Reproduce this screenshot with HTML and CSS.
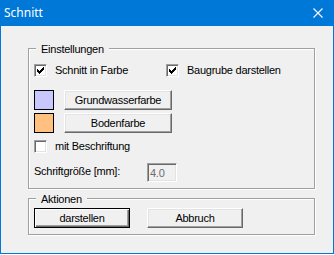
FILE: index.html
```html
<!DOCTYPE html>
<html lang="de">

<head>
  <meta charset="UTF-8" />
  <title>Schnitt</title>
  <link rel="stylesheet" href="styles.css">
</head>

<body>

<div class="window">
  <!-- Titelleiste -->
  <div class="titlebar">
    <span class="title">Schnitt</span>
    <svg class="close" width="10" height="10" viewBox="0 0 10 10">
      <path d="M0.5 0.5L9.5 9.5M9.5 0.5L0.5 9.5" stroke="#fff" stroke-width="1.1" />
    </svg>
  </div>

  <div class="client">
    <!-- Gruppe Einstellungen -->
    <div class="group group-settings">
      <span class="group-label">Einstellungen</span>

      <div class="check-row">
        <label class="check check-wide">
          <span class="box">
            <svg width="7" height="7" viewBox="0 0 7 7" shape-rendering="crispEdges"><path d="M6 0h1v1h-1zM5 1h2v1h-2zM0 2h1v1h-1zM4 2h3v1h-3zM0 3h2v1h-2zM3 3h3v1h-3zM0 4h5v1h-5zM1 5h3v1h-3zM2 6h1v1h-1z" /></svg>
          </span>
          Schnitt in Farbe
        </label>
        <label class="check">
          <span class="box">
            <svg width="7" height="7" viewBox="0 0 7 7" shape-rendering="crispEdges"><path d="M6 0h1v1h-1zM5 1h2v1h-2zM0 2h1v1h-1zM4 2h3v1h-3zM0 3h2v1h-2zM3 3h3v1h-3zM0 4h5v1h-5zM1 5h3v1h-3zM2 6h1v1h-1z" /></svg>
          </span>
          Baugrube darstellen
        </label>
      </div>

      <div class="color-row">
        <span class="swatch swatch-water"></span>
        <button type="button" class="btn btn-color">Grundwasserfarbe</button>
      </div>
      <div class="color-row">
        <span class="swatch swatch-ground"></span>
        <button type="button" class="btn btn-color">Bodenfarbe</button>
      </div>

      <div class="check-row check-row-caption">
        <label class="check">
          <span class="box"></span>
          mit Beschriftung
        </label>
      </div>

      <div class="font-row">
        <span class="font-label">Schriftgröße [mm]:</span>
        <input type="text" class="field" value="4.0" disabled />
      </div>
    </div>

    <!-- Gruppe Aktionen -->
    <div class="group group-actions">
      <span class="group-label">Aktionen</span>
      <button type="button" class="btn btn-action btn-default">darstellen</button>
      <button type="button" class="btn btn-action">Abbruch</button>
    </div>
  </div>
</div>

</body>
</html>
```

FILE: styles.css
```css
* {
  box-sizing: border-box;
}
body {
  margin: 0;
  background: #fff;
  font-family: "Liberation Sans", Arial, sans-serif;
  font-size: 11px;
  letter-spacing: -0.25px;
  color: #000;
}
.window {
  width: 334px;
  height: 254px;
  border: 1px solid #0078d7;
  border-top: 0;
  background: #f0f0f0;
}
.titlebar {
  height: 26px;
  background: #0078d7;
  display: flex;
  align-items: center;
  justify-content: space-between;
  padding: 0 10px 0 3px;
}
.title {
  font-family: "Segoe UI", "Noto Sans", sans-serif;
  font-size: 12px;
  line-height: 16px;
  letter-spacing: 0;
  color: #fff;
}
.close {
  display: block;
}
.client {
  padding: 22px 0 0 27px;
}

/* Rahmen der Gruppen (geätzt) */
.group {
  position: relative;
  width: 287px;
  border: 1px solid #a0a0a0;
  box-shadow: 1px 1px 0 #fff, inset 1px 1px 0 #fff;
}
.group-label {
  position: absolute;
  left: 7px;
  top: -6px;
  padding: 0 5px;
  line-height: 13px;
  background: #f0f0f0;
}
.group-settings {
  height: 141px;
  padding: 15px 0 0 5px;
}
.group-actions {
  height: 37px;
  margin-top: 9px;
  padding: 9px 0 0 5px;
  display: flex;
  gap: 17px;
}

/* Kontrollkästchen */
.check-row {
  display: flex;
}
.check-row-caption {
  margin-top: 7px;
}
.check {
  display: flex;
  align-items: center;
  gap: 8px;
  line-height: 13px;
}
.check-wide {
  width: 132px;
}
.box {
  width: 13px;
  height: 13px;
  display: flex;
  padding: 2px 0 0 2px;
  background: #fff;
  border: 1px solid;
  border-color: #a0a0a0 #fff #fff #a0a0a0;
  box-shadow: inset 1px 1px 0 #696969, inset -1px -1px 0 #e3e3e3;
}

/* Farben */
.color-row {
  display: flex;
  gap: 10px;
  margin-top: 13px;
}
.color-row + .color-row {
  margin-top: 3px;
}
.swatch {
  width: 20px;
  height: 20px;
  border: 1px solid #000;
}
.swatch-water {
  background: #c8c8ff;
}
.swatch-ground {
  background: #ffc080;
}

/* Schaltflächen */
.btn {
  font: inherit;
  letter-spacing: inherit;
  color: #000;
  height: 20px;
  padding: 0;
  line-height: 13px;
  background: #f0f0f0;
  border: 1px solid;
  border-color: #fff #696969 #696969 #fff;
  box-shadow: inset -1px -1px 0 #a0a0a0, inset 1px 1px 0 #e3e3e3;
}
.btn-color {
  width: 108px;
}
.btn-action {
  width: 96px;
}
.btn-default {
  border-color: #000;
  box-shadow: inset 1px 1px 0 #fff, inset -1px -1px 0 #696969, inset -2px -2px 0 #a0a0a0;
}

/* Schriftgröße */
.font-row {
  display: flex;
  margin-top: 10px;
}
.font-label {
  width: 113px;
  padding-top: 2px;
  line-height: 13px;
}
.field {
  width: 30px;
  height: 19px;
  font: inherit;
  letter-spacing: inherit;
  line-height: 13px;
  padding: 0 0 0 2px;
  color: #6d6d6d;
  background: #f0f0f0;
  border: 1px solid;
  border-color: #a0a0a0 #fff #fff #a0a0a0;
  box-shadow: inset 1px 1px 0 #696969, inset -1px -1px 0 #e3e3e3;
  outline: none;
}
```
